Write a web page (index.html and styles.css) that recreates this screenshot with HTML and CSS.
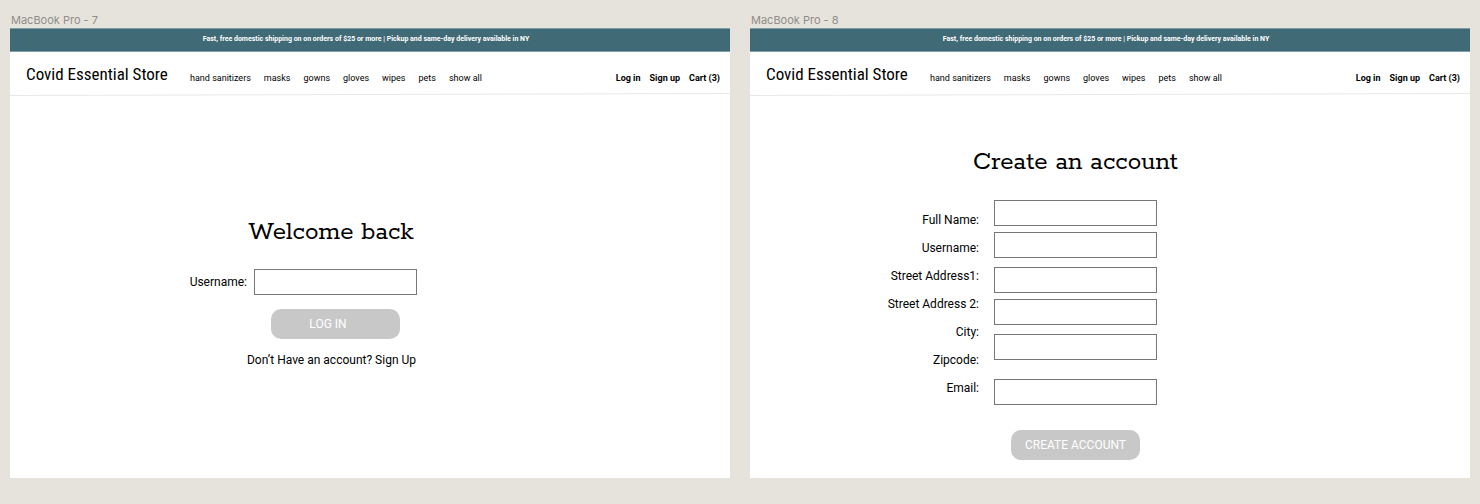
FILE: index.html
```
<!DOCTYPE html>
<html lang="en">
<head>
<meta charset="utf-8">
<title>Covid Essential Store</title>
<link rel="stylesheet" href="styles.css">
</head>
<body>
<main class="board">
  <section class="artboard">
    <h2 class="artboard-name">MacBook Pro - 7</h2>
    <div class="screen">
      <p class="promo">Fast, free domestic shipping on on orders of $25 or more | Pickup and same-day delivery available in NY</p>
      <header class="header">
        <a class="brand" href="#">Covid Essential Store</a>
        <nav class="nav">
          <a href="#">hand sanitizers</a>
          <a href="#">masks</a>
          <a href="#">gowns</a>
          <a href="#">gloves</a>
          <a href="#">wipes</a>
          <a href="#">pets</a>
          <a href="#">show all</a>
        </nav>
        <nav class="account">
          <a href="#">Log in</a>
          <a href="#">Sign up</a>
          <a href="#">Cart (3)</a>
        </nav>
      </header>
      <svg class="rule" viewBox="0 0 720 3" preserveAspectRatio="none" aria-hidden="true"><path d="M0 2.5L720 .5" stroke="#e9e7e7"/></svg>
      <form class="login">
        <h1 class="title">Welcome back</h1>
        <div class="login-row">
          <label class="label" for="login-user">Username:</label>
          <input class="field" id="login-user" type="text">
        </div>
        <button class="button button-login" type="button">LOG IN</button>
        <p class="hint">Don’t Have an account? <a href="#">Sign Up</a></p>
      </form>
    </div>
  </section>

  <section class="artboard">
    <h2 class="artboard-name">MacBook Pro - 8</h2>
    <div class="screen">
      <p class="promo">Fast, free domestic shipping on on orders of $25 or more | Pickup and same-day delivery available in NY</p>
      <header class="header">
        <a class="brand" href="#">Covid Essential Store</a>
        <nav class="nav">
          <a href="#">hand sanitizers</a>
          <a href="#">masks</a>
          <a href="#">gowns</a>
          <a href="#">gloves</a>
          <a href="#">wipes</a>
          <a href="#">pets</a>
          <a href="#">show all</a>
        </nav>
        <nav class="account">
          <a href="#">Log in</a>
          <a href="#">Sign up</a>
          <a href="#">Cart (3)</a>
        </nav>
      </header>
      <svg class="rule" viewBox="0 0 720 3" preserveAspectRatio="none" aria-hidden="true"><path d="M0 2.5L720 .5" stroke="#e9e7e7"/></svg>
      <form class="signup">
        <h1 class="title">Create an account</h1>
        <div class="labels">
          <label class="label" for="full-name">Full Name:</label>
          <label class="label" for="username">Username:</label>
          <label class="label" for="street-1">Street Address1:</label>
          <label class="label" for="street-2">Street Address 2:</label>
          <label class="label" for="city">City:</label>
          <span class="label">Zipcode:</span>
          <label class="label" for="email">Email:</label>
        </div>
        <div class="fields">
          <div class="field-group">
            <input class="field" id="full-name" type="text">
            <input class="field" id="username" type="text">
          </div>
          <div class="field-group">
            <input class="field" id="street-1" type="text">
            <input class="field" id="street-2" type="text">
          </div>
          <input class="field" id="city" type="text">
          <input class="field field-email" id="email" type="email">
          <button class="button" type="button">CREATE ACCOUNT</button>
        </div>
      </form>
    </div>
  </section>
</main>
</body>
</html>
```
FILE: styles.css
```
* { box-sizing: border-box; }

body {
  margin: 0;
  background: #e6e3dc;
  color: #000;
  font-family: Roboto, "Liberation Sans", sans-serif;
  font-size: 12px;
  line-height: 16px;
}

h1, h2, p { margin: 0; font-weight: 400; }
a { color: inherit; text-decoration: none; }

.board {
  display: grid;
  grid-template-columns: 1fr 1fr;
  gap: 20px;
  padding: 12px 10px 24px;
}

.artboard { display: flex; flex-direction: column; min-width: 0; }
.artboard-name {
  padding-left: 1px;
  color: #8f8d89;
  font: 11px/16px Inter, sans-serif;
}
.screen { flex: 1; background: #fff; padding-bottom: 18px; }

.promo {
  padding: 5px 8px 6px 0;
  border: 1px solid #7f9da5;
  border-width: 1px 0;
  background: #416a77;
  color: #fff;
  font: 700 7px/11px Roboto, sans-serif;
  text-align: center;
}

.header {
  display: flex;
  align-items: center;
  padding: 10px 10px 7px 16px;
  font-size: 9px;
  line-height: 12px;
}
.brand {
  flex: none;
  width: 164px;
  font: 17px/24px "Roboto Condensed", "Liberation Sans Narrow", sans-serif;
  white-space: nowrap;
}
.nav { display: flex; gap: 13px; padding-top: 7px; white-space: nowrap; }
.account { display: flex; gap: 9px; margin-left: auto; padding-top: 7px; font-weight: 700; white-space: nowrap; }
.rule { display: block; width: 100%; height: 3px; }

.title {
  font: 27px/32px Rokkitt, "DejaVu Serif", serif;
  text-align: center;
  white-space: nowrap;
}
.field {
  width: 163px;
  height: 26px;
  padding: 0 6px;
  border: 1px solid #777;
  border-radius: 0;
  background: #fff;
  font: inherit;
}
.button {
  width: 129px;
  height: 30px;
  padding: 0;
  border: 0;
  border-radius: 10px;
  background: #c8c8c8;
  color: #fff;
  font: inherit;
}

.login {
  display: flex;
  flex-direction: column;
  align-items: flex-end;
  width: 228px;
  margin: 121px 0 0 179px;
}
.login .title { width: 172px; }
.login-row { display: flex; align-items: center; gap: 7px; margin-top: 20px; }
.button-login { margin: 14px 17px 0 0; padding-right: 15px; }
.hint { margin-top: 13px; padding-right: 1px; white-space: nowrap; }

.signup {
  display: grid;
  grid-template-columns: 92px 163px;
  column-gap: 15px;
  margin: 51px 0 0 137px;
}
.signup .title { grid-column: 2; justify-self: center; }
.labels {
  grid-column: 1;
  display: flex;
  flex-direction: column;
  gap: 12px;
  padding-top: 33px;
  text-align: right;
  white-space: nowrap;
}
.fields {
  display: flex;
  flex-direction: column;
  align-items: center;
  gap: 9px;
  padding-top: 21px;
}
.field-group { display: flex; flex-direction: column; gap: 6px; }
.field-email { margin: 10px 0 16px; }
```
